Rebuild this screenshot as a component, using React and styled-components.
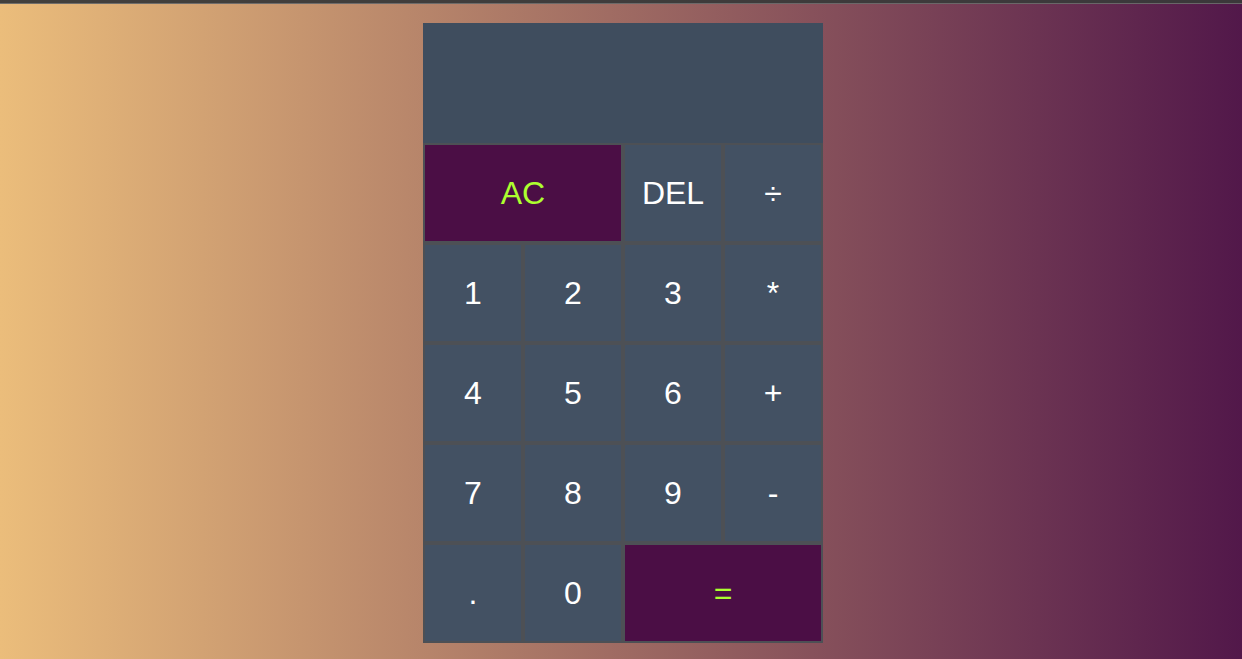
import React from "react";
import styled, { createGlobalStyle } from "styled-components";

const Global = createGlobalStyle`
  html, body { margin: 0; padding: 0; }
  body {
    min-height: 100vh;
    background: linear-gradient(to right, #ebbd7b, #52184a);
    font-family: "Liberation Sans", Arial, sans-serif;
  }
`;

const Page = styled.div`
  min-height: 100vh;
  display: flex;
  flex-direction: column;
`;

const TopStrip = styled.div`
  height: 3px;
  background: #3a3a3a;
  border-bottom: 1px solid #6a6a6a;
  opacity: 0.95;
`;

const Grid = styled.div`
  display: grid;
  justify-content: center;
  grid-template-columns: repeat(4, 100px);
  grid-template-rows: 120px repeat(5, 100px);
  margin-top: 19px;
  padding-left: 4px;
`;

const Display = styled.div`
  grid-column: 1 / -1;
  background: #3f4d5e;
`;

const Key = styled.button`
  box-sizing: border-box;
  border: 2px solid #4d5055;
  background: ${(p) => (p.$accent ? "#4b0e45" : "#435163")};
  color: ${(p) => (p.$accent ? "#adff2f" : "#ffffff")};
  font-family: "Liberation Sans", Arial, sans-serif;
  font-size: 32px;
  grid-column: ${(p) => (p.$wide ? "span 2" : "auto")};
  cursor: pointer;
  outline: none;
  padding: 0;
`;

const keys = [
  { t: "AC", accent: true, wide: true },
  { t: "DEL" },
  { t: "÷" },
  { t: "1" }, { t: "2" }, { t: "3" }, { t: "*" },
  { t: "4" }, { t: "5" }, { t: "6" }, { t: "+" },
  { t: "7" }, { t: "8" }, { t: "9" }, { t: "-" },
  { t: "." }, { t: "0" },
  { t: "=", accent: true, wide: true },
];

export default function App() {
  return (
    <Page>
      <Global />
      <TopStrip />
      <Grid>
        <Display />
        {keys.map((k, i) => (
          <Key key={i} $accent={k.accent} $wide={k.wide}>
            {k.t}
          </Key>
        ))}
      </Grid>
    </Page>
  );
}
